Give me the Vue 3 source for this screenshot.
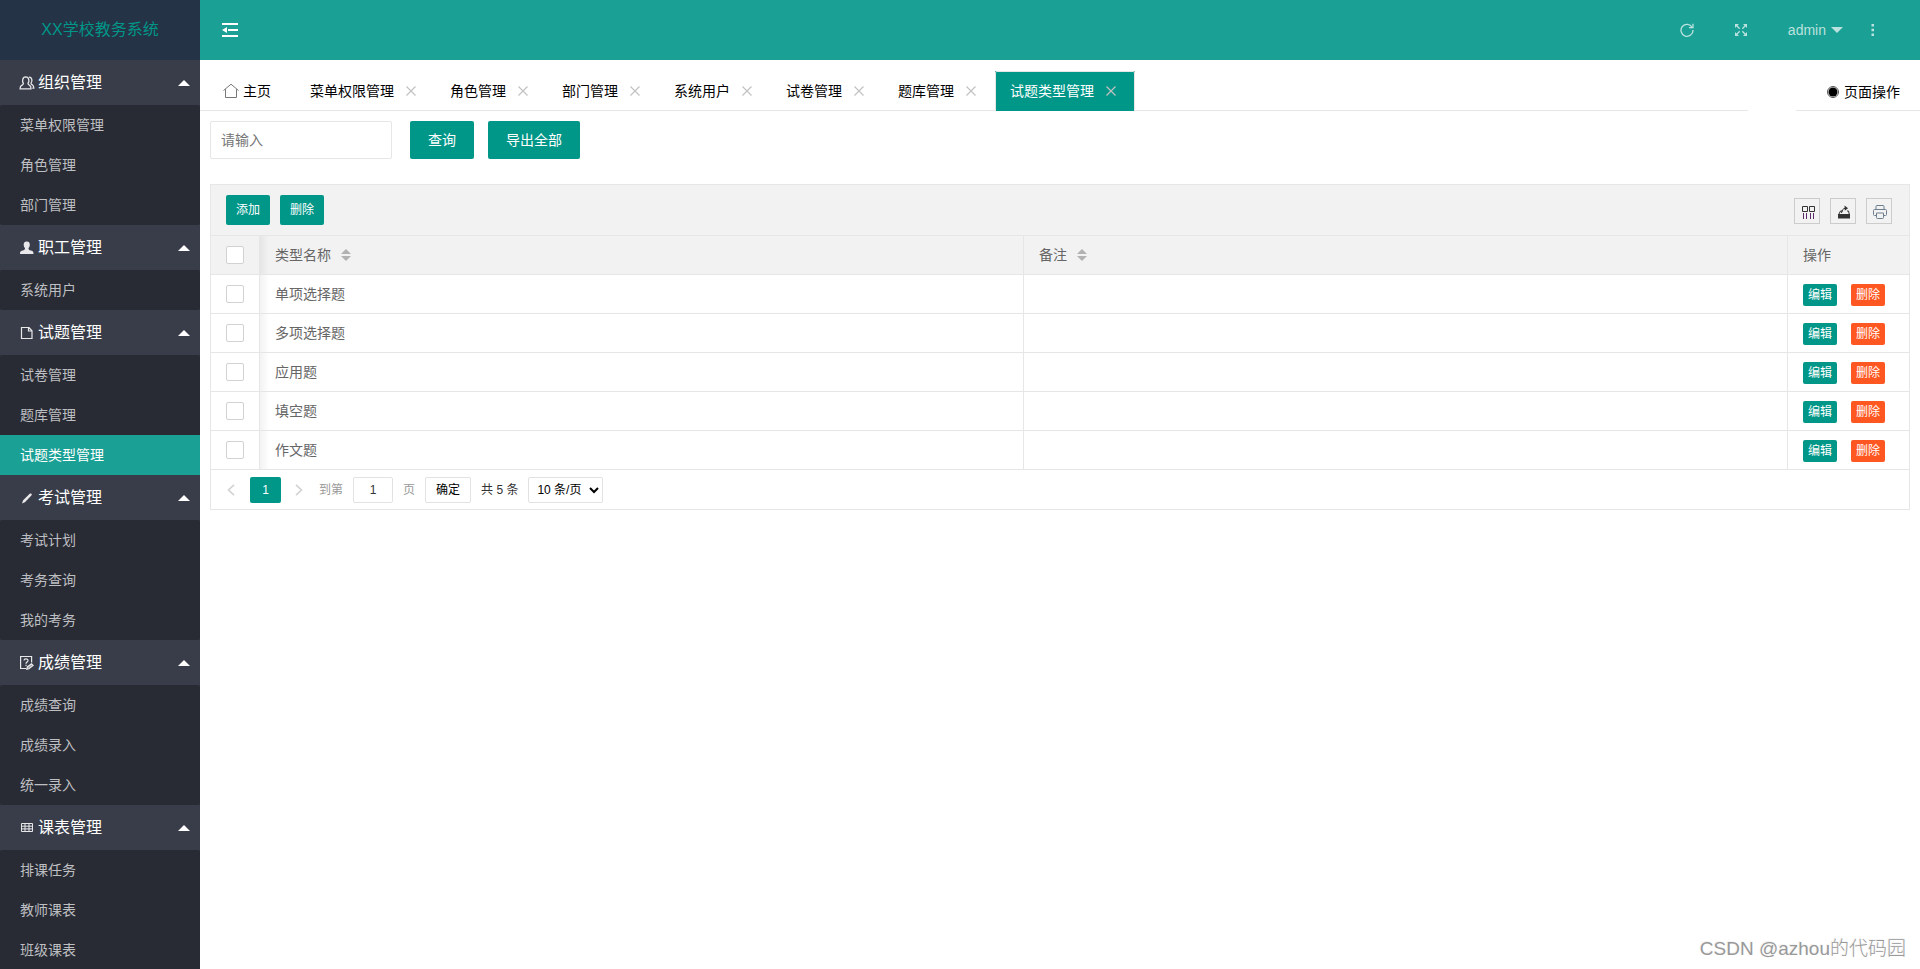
<script setup>
import { ref } from 'vue'

const groups = [
  { name: '组织管理', icon: 'team', items: ['菜单权限管理', '角色管理', '部门管理'] },
  { name: '职工管理', icon: 'user', items: ['系统用户'] },
  { name: '试题管理', icon: 'file', items: ['试卷管理', '题库管理', '试题类型管理'] },
  { name: '考试管理', icon: 'pen', items: ['考试计划', '考务查询', '我的考务'] },
  { name: '成绩管理', icon: 'survey', items: ['成绩查询', '成绩录入', '统一录入'] },
  { name: '课表管理', icon: 'table', items: ['排课任务', '教师课表', '班级课表'] },
]
const tabs = ['菜单权限管理', '角色管理', '部门管理', '系统用户', '试卷管理', '题库管理', '试题类型管理']
const current = ref('试题类型管理')
const rows = ['单项选择题', '多项选择题', '应用题', '填空题', '作文题']
const keyword = ref('')
const page = ref('1')
</script>

<template>
  <div class="layout">
    <aside class="side">
      <div class="logo">XX学校教务系统</div>
      <nav>
        <section v-for="g in groups" :key="g.name">
          <button type="button" class="group">
            <svg class="group-icon" viewBox="0 0 16 16" width="16" height="16" fill="none" stroke="currentColor">
              <g v-if="g.icon === 'team'" stroke-width="1.3">
                <path d="M4.4 8.2C3 6.8 3.2 2 6.7 1.9c3.6 0 3.8 4.800 2.300 6.300 0 1.200.6 1.500 1.700 2.200 1 .6 1.300 1.600 1.300 3.500H1.100c0-1.900.3-2.900 1.500-3.500 1.200-.7 1.800-1 1.800-2.200z" />
                <path d="M10 2.200c2.800-.2 3.900 3.500 2 6 .1 1 .7 1.300 1.500 1.800.9.600 1.300 1.500 1.300 3.200h-1.500" />
              </g>
              <path v-else-if="g.icon === 'user'" fill="currentColor" stroke="none" d="M7.800 1.500c2.400 0 3.200 1.600 3 3.600-.1 1.600-.7 2.400-1.300 3.200 0 1.400.6 1.700 2.500 2.300 1.900.5 2.500 1.200 2.500 3.400H1c0-2.200.6-2.900 2.500-3.400 1.900-.6 2.500-.9 2.500-2.300-.6-.8-1.200-1.600-1.300-3.200-.2-2 .7-3.600 3.100-3.600z" />
              <path v-else-if="g.icon === 'file'" stroke-width="1.200" d="M2.500 2.500h7.500l3 3.300v7.700H2.500zM9.500 2.500v3.500H13" />
              <path v-else-if="g.icon === 'pen'" fill="currentColor" stroke="none" d="M3 13.500l1.100-3.300 6.600-6.400c.5-.5 1.200-.5 1.700 0 .5.500.5 1.200 0 1.700l-6.500 6.700z" />
              <g v-else-if="g.icon === 'survey'" stroke-width="1.200">
                <path d="M7 13.500H1.600v-12h11v6" />
                <path d="M5 5.600c0-2.300 4-2.300 4-.1 0 1.500-2 1.500-2 3.200M7 9.800v1.300" />
                <path d="M7.800 14.200l.5-2.300 4.200-3.200 1.600 1.800-4.200 3.300z" fill="#9c9ea4" />
              </g>
              <path v-else stroke-width="1" d="M2.500 3.500h11v8h-11zM2.500 6.200h11M2.500 8.900h11M6 3.500v8M10 3.500v8" />
            </svg>
            <span>{{ g.name }}</span>
            <i class="arrow-up"></i>
          </button>
          <ul class="sub">
            <li v-for="item in g.items" :key="item">
              <a href="#" :class="{ active: item === current }">{{ item }}</a>
            </li>
          </ul>
        </section>
      </nav>
    </aside>

    <div class="main">
      <header class="header">
        <button type="button" class="icon-btn" aria-label="收起菜单">
          <svg viewBox="0 0 16 14" width="16" height="14" fill="currentColor">
            <path d="M0 0h16v2H0zM6 6h10v2H6zM0 12h16v2H0zM5 4v6L0 7z" />
          </svg>
        </button>
        <div class="header-right">
          <button type="button" class="icon-btn" aria-label="刷新">
            <svg viewBox="0 0 14 14" width="14" height="14" fill="none" stroke="currentColor" stroke-width="1.300">
              <path d="M12.200 4.300A6 6 0 1 0 13 7" />
              <path d="M13 .8v3.800H9" />
            </svg>
          </button>
          <button type="button" class="icon-btn full" aria-label="全屏">
            <svg viewBox="0 0 12 12" width="12" height="12" fill="currentColor" stroke="currentColor">
              <path stroke="none" d="M0 0h4L0 4zM12 0v4L8 0zM0 12V8l4 4zM12 12H8l4-4z" />
              <path stroke-width="1.300" d="M1 1l3.700 3.700M11 1L7.300 4.700M1 11l3.700-3.700M11 11L7.300 7.300" />
            </svg>
          </button>
          <button type="button" class="icon-btn user">admin<i class="arrow-down"></i></button>
          <button type="button" class="icon-btn more" aria-label="更多">
            <svg viewBox="0 0 4 12" width="4" height="12" fill="currentColor">
              <path d="M.5 0h2.500v2.500H.5zM.5 4.800h2.500v2.500H.5zM.5 9.500h2.500V12H.5z" />
            </svg>
          </button>
        </div>
      </header>

      <div class="tabbar">
        <ul class="tabs">
          <li class="tab home">
            <a href="#">
              <svg viewBox="0 0 16 16" width="16" height="16" fill="none" stroke="#777" stroke-width="1">
                <path d="M.5 7.500L8 1.200l7.500 6.300M2.500 6.200v8.300h11V6.200" />
              </svg>
              主页
            </a>
          </li>
          <li v-for="t in tabs" :key="t" class="tab" :class="{ current: t === current }">
            <a href="#">{{ t }}</a>
            <button type="button" class="close" :aria-label="'关闭' + t">
              <svg viewBox="0 0 10 10" width="10" height="10" stroke="currentColor" stroke-width="1.200">
                <path d="M.5 .5l9 9M9.500 .5l-9 9" />
              </svg>
            </button>
          </li>
        </ul>
        <button type="button" class="page-ops">
          <svg viewBox="0 0 12 12" width="12" height="12">
            <circle cx="6" cy="6" r="5.500" fill="none" stroke="#555" stroke-width="1" />
            <circle cx="6" cy="6" r="4.500" fill="#000" />
          </svg>
          页面操作
        </button>
      </div>

      <main class="content">
        <form class="search" @submit.prevent>
          <input v-model="keyword" type="text" placeholder="请输入" aria-label="关键字" />
          <button type="submit" class="btn">查询</button>
          <button type="button" class="btn">导出全部</button>
        </form>

        <div class="panel">
          <div class="toolbar">
            <button type="button" class="btn small">添加</button>
            <button type="button" class="btn small">删除</button>
            <div class="tools">
              <button type="button" aria-label="筛选列">
                <svg viewBox="0 0 13 13" width="13" height="13" fill="none" stroke="#333">
                  <path d="M.5 .5h5v5h-5zM7.500 .5h5v5h-5z" />
                  <path stroke="#5b2a68" d="M1.500 7v6M4.500 7v6M8.500 7v6M11.500 7v6" />
                </svg>
              </button>
              <button type="button" aria-label="导出">
                <svg viewBox="0 0 14 14" width="14" height="14" fill="#333">
                  <path d="M1 9h12v4.500H1z" />
                  <path fill="none" stroke="#333" d="M2 9l1.500-3H6M10 6h1.500l.7 3M4.500 8C5 5 6 3.500 8.500 3.200" />
                  <path d="M7.500 .5L11 3.300 7.800 5.800z" />
                </svg>
              </button>
              <button type="button" aria-label="打印">
                <svg viewBox="0 0 14 14" width="14" height="14" fill="none" stroke="#6d7f8f">
                  <path d="M3 4V1.500q0-1 1-1h6q1 0 1 1V4M3 10.500H1.500q-1 0-1-1v-4q0-1 1-1h11q1 0 1 1v4q0 1-1 1H11M3.500 8h7v4.500q0 1-1 1h-5q-1 0-1-1z" />
                </svg>
              </button>
            </div>
          </div>

          <table>
            <colgroup>
              <col class="col-check" />
              <col />
              <col />
              <col class="col-ops" />
            </colgroup>
            <thead>
              <tr>
                <th class="check"><input type="checkbox" aria-label="全选" /></th>
                <th>
                  <span class="sortable">类型名称<span class="sort"><i class="up"></i><i class="down"></i></span></span>
                </th>
                <th>
                  <span class="sortable">备注<span class="sort"><i class="up"></i><i class="down"></i></span></span>
                </th>
                <th>操作</th>
              </tr>
            </thead>
            <tbody>
              <tr v-for="r in rows" :key="r">
                <td class="check"><input type="checkbox" :aria-label="'选择' + r" /></td>
                <td>{{ r }}</td>
                <td></td>
                <td>
                  <div class="ops">
                    <button type="button" class="btn mini">编辑</button>
                    <button type="button" class="btn mini danger">删除</button>
                  </div>
                </td>
              </tr>
            </tbody>
          </table>

          <div class="pager">
            <button type="button" class="step" aria-label="上一页">
              <svg viewBox="0 0 8 12" width="8" height="12" fill="none" stroke="currentColor" stroke-width="1.600"><path d="M7 .8L1.500 6 7 11.200" /></svg>
            </button>
            <button type="button" class="num">1</button>
            <button type="button" class="step" aria-label="下一页">
              <svg viewBox="0 0 8 12" width="8" height="12" fill="none" stroke="currentColor" stroke-width="1.600"><path d="M1 .8L6.500 6 1 11.200" /></svg>
            </button>
            <label class="goto">到第<input v-model="page" type="text" />页</label>
            <button type="button" class="ok">确定</button>
            <span class="total">共 5 条</span>
            <select aria-label="每页条数">
              <option>10 条/页</option>
              <option>20 条/页</option>
              <option>30 条/页</option>
            </select>
          </div>
        </div>
      </main>
    </div>

    <div class="watermark">CSDN @azhou的代码园</div>
  </div>
</template>

<style>
body {
  margin: 0;
  background: #fff;
}
</style>

<style scoped>
.layout {
  display: flex;
  height: 100vh;
  overflow: hidden;
  position: relative;
  font: 14px/24px "Liberation Sans", "Noto Sans CJK SC", sans-serif;
  color: #333;
}
.layout * {
  box-sizing: border-box;
}
button,
input,
select {
  font: inherit;
  color: inherit;
  margin: 0;
}
button {
  border: 0;
  padding: 0;
  background: none;
  cursor: pointer;
}
a {
  color: inherit;
  text-decoration: none;
}
ul {
  list-style: none;
  margin: 0;
  padding: 0;
}
svg {
  display: block;
  flex: none;
}

/* sidebar */
.side {
  width: 200px;
  flex: none;
  background: #393d49;
  overflow: hidden;
}
.logo {
  height: 60px;
  line-height: 60px;
  text-align: center;
  font-size: 16px;
  color: #009688;
  background: #253346;
}
.group {
  display: flex;
  align-items: center;
  width: 100%;
  height: 45px;
  padding: 0 10px 0 19px;
  font-size: 16px;
  color: #fff;
}
.group span {
  flex: 1;
  margin-left: 3px;
  text-align: left;
}
.group-icon {
  color: #e8e8ea;
}
.arrow-up {
  border: 6px solid transparent;
  border-top-width: 0;
  border-bottom-color: #fff;
}
.sub {
  background: #282b33;
  border-radius: 2px;
}
.sub a {
  display: block;
  height: 40px;
  line-height: 40px;
  padding-left: 20px;
  color: #bebfc2;
}
.sub a.active {
  background: #1aa094;
  color: #fff;
}

/* header */
.main {
  flex: 1;
  min-width: 0;
}
.header {
  display: flex;
  align-items: center;
  justify-content: space-between;
  height: 60px;
  padding: 0 45px 0 22px;
  background: #1aa094;
  color: #fff;
}
.icon-btn {
  display: flex;
  align-items: center;
}
.header-right {
  display: flex;
  align-items: center;
  color: #bbe2de;
}
.full,
.user {
  margin-left: 41px;
}
.more {
  margin-left: 28px;
}
.arrow-down {
  margin-left: 5px;
  border: 6px solid transparent;
  border-bottom-width: 0;
  border-top-color: #bbe2de;
}

/* tabs */
.tabbar {
  display: flex;
  gap: 48px;
  padding-top: 11px;
  color: #000;
}
.tabs {
  display: flex;
  flex: 1;
  height: 40px;
  padding-left: 8px;
  border-bottom: 1px solid #e6e6e6;
}
.tab {
  display: flex;
  align-items: center;
  height: 40px;
  padding: 0 15px;
  position: relative;
  white-space: nowrap;
}
.home {
  margin-right: 9px;
}
.home a {
  display: flex;
  align-items: center;
  gap: 4px;
}
.current {
  background: #009688;
  color: #fff;
}
.current::after {
  content: "";
  position: absolute;
  inset: 0;
  border: 1px solid #e6e6e6;
  border-bottom: 0;
  border-radius: 2px 2px 0 0;
  pointer-events: none;
}
.close {
  display: flex;
  align-items: center;
  justify-content: center;
  width: 18px;
  height: 18px;
  margin-left: 8px;
  color: #c2c2c2;
}
.page-ops {
  display: flex;
  align-items: center;
  gap: 5px;
  height: 40px;
  padding: 2px 20px 0 31px;
  border-bottom: 1px solid #e6e6e6;
}

/* content */
.content {
  padding: 10px;
}
.search {
  display: flex;
  margin-bottom: 25px;
}
.search input {
  width: 182px;
  height: 38px;
  margin-right: 18px;
  padding: 0 10px;
  border: 1px solid #e6e6e6;
  border-radius: 2px;
  background: #fff;
}
.search input::placeholder {
  color: #757575;
}
.btn {
  height: 38px;
  padding: 0 18px;
  border-radius: 2px;
  background: #009688;
  color: #fff;
  white-space: nowrap;
}
.search .btn + .btn {
  margin-left: 14px;
}
.btn.small {
  height: 30px;
  padding: 0 10px;
  font-size: 12px;
}
.btn.mini {
  height: 22px;
  padding: 0 5px;
  font-size: 12px;
  line-height: 22px;
}
.btn.danger {
  background: #ff5722;
}
.panel {
  border: 1px solid #e6e6e6;
}
.toolbar {
  display: flex;
  align-items: center;
  gap: 10px;
  padding: 10px 17px 10px 15px;
  border-bottom: 1px solid #e6e6e6;
  background: #f2f2f2;
}
.tools {
  display: flex;
  gap: 10px;
  margin-left: auto;
  padding-top: 2px;
}
.tools button {
  display: flex;
  align-items: center;
  justify-content: center;
  width: 26px;
  height: 26px;
  padding: 2px 0 0 2px;
  border: 1px solid #ccc;
}
table {
  width: 100%;
  table-layout: fixed;
  border-collapse: separate;
  border-spacing: 0;
  color: #666;
}
.col-check {
  width: 49px;
}
.col-ops {
  width: 121px;
}
th,
td {
  height: 39px;
  padding: 0 15px;
  border-bottom: 1px solid #e6e6e6;
  border-right: 1px solid #e6e6e6;
  text-align: left;
  font-weight: 400;
}
th {
  background: #f2f2f2;
}
th:last-child,
td:last-child {
  border-right: 0;
}
.check + th,
.check + td {
  background-image: linear-gradient(to right, rgba(0, 0, 0, 0.05), transparent 9px);
}
.check input {
  display: block;
  appearance: none;
  width: 18px;
  height: 18px;
  border: 1px solid #d2d2d2;
  border-radius: 2px;
  background: #fff;
}
.sortable {
  display: flex;
  align-items: center;
  gap: 10px;
}
.sort {
  display: flex;
  flex-direction: column;
  gap: 2px;
}
.sort i {
  border: 5px solid transparent;
}
.sort .up {
  border-top-width: 0;
  border-bottom-color: #b2b2b2;
}
.sort .down {
  border-bottom-width: 0;
  border-top-color: #b2b2b2;
}
.ops {
  display: flex;
  gap: 14px;
  padding-top: 2px;
}

/* pager */
.pager {
  display: flex;
  align-items: center;
  height: 39px;
  padding-left: 7px;
  font-size: 12px;
}
.step {
  display: flex;
  align-items: center;
  justify-content: center;
  width: 26px;
  height: 26px;
  color: #d2d2d2;
}
.num {
  width: 31px;
  height: 26px;
  margin: 0 5px 0 6px;
  border-radius: 2px;
  background: #009688;
  color: #fff;
}
.goto {
  display: flex;
  align-items: center;
  margin-left: 7px;
  color: #999;
}
.goto input {
  width: 40px;
  height: 26px;
  margin: 0 10px;
  padding: 0 3px;
  border: 1px solid #e2e2e2;
  border-radius: 2px;
  text-align: center;
  color: #333;
}
.ok {
  height: 26px;
  margin: 0 10px;
  padding: 0 10px;
  border: 1px solid #e2e2e2;
  border-radius: 2px;
  color: #000;
}
.pager select {
  height: 26px;
  margin-left: 10px;
  padding: 0 4px;
  border: 1px solid #e2e2e2;
  border-radius: 2px;
  background: #fff;
  color: #000;
}

.watermark {
  position: absolute;
  right: 14px;
  bottom: 7px;
  font: 19px/26px "Liberation Sans", "Noto Sans CJK SC", sans-serif;
  font-weight: 300;
  color: #999;
  text-shadow: -1px -1px 0 #f4f4f4;
  pointer-events: none;
}
</style>
